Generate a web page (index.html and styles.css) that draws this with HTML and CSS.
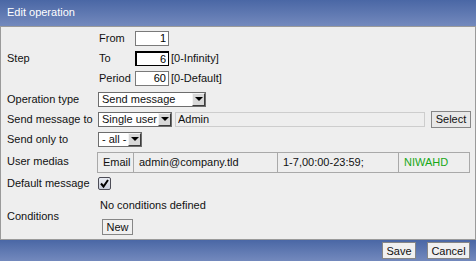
FILE: index.html
```html
<!DOCTYPE html>
<html lang="en">
<head>
  <meta charset="UTF-8" />
  <title>Edit operation</title>
  <link rel="stylesheet" href="styles.css">
</head>
<body>
  <div class="dialog">
    <div class="head">Edit operation</div>

    <div class="body">
      <!-- Step -->
      <div class="row step">
        <div class="label">Step</div>
        <div class="ctl">
          <div class="sub"><span class="sublabel">From</span><input class="num" type="text" value="1"></div>
          <div class="sub"><span class="sublabel">To</span><input class="num focus" type="text" value="6"><span class="hint">[0-Infinity]</span></div>
          <div class="sub"><span class="sublabel">Period</span><input class="num" type="text" value="60"><span class="hint">[0-Default]</span></div>
        </div>
      </div>

      <div class="row">
        <div class="label">Operation type</div>
        <div class="ctl">
          <span class="select w-op">Send message<span class="arrow"></span></span>
        </div>
      </div>

      <div class="row">
        <div class="label">Send message to</div>
        <div class="ctl">
          <span class="select w-user">Single user<span class="arrow"></span></span>
          <input class="text-off" type="text" value="Admin" readonly>
          <button class="btn btn-select">Select</button>
        </div>
      </div>

      <div class="row">
        <div class="label">Send only to</div>
        <div class="ctl">
          <span class="select w-all">- all -<span class="arrow"></span></span>
        </div>
      </div>

      <div class="row medias">
        <div class="label">User medias</div>
        <div class="ctl">
          <table class="media-table">
            <tr>
              <td class="c-type">Email</td>
              <td class="c-to">admin@company.tld</td>
              <td class="c-when">1-7,00:00-23:59;</td>
              <td class="c-sev">NIWAHD</td>
            </tr>
          </table>
        </div>
      </div>

      <div class="row">
        <div class="label">Default message</div>
        <div class="ctl">
          <span class="check">
            <svg width="11" height="11" viewBox="0 0 11 11"><path d="M2 5.5 L4.5 8.5 L9 2" fill="none" stroke="#000" stroke-width="2"/></svg>
          </span>
        </div>
      </div>

      <div class="row conditions">
        <div class="label">Conditions</div>
        <div class="ctl cond">
          <div class="none">No conditions defined</div>
          <button class="btn btn-new">New</button>
        </div>
      </div>
    </div>

    <div class="foot">
      <button class="btn btn-save">Save</button>
      <button class="btn btn-cancel">Cancel</button>
    </div>
  </div>
</body>
</html>
```

FILE: styles.css
```css
body {
  margin: 0;
  font-family: 'Liberation Sans', Arial, sans-serif;
  font-size: 11px;
  color: #111;
  background: #fff;
}

.dialog {
  width: 476px;
  height: 261px;
}

.head {
  height: 26px;
  line-height: 24px;
  padding-left: 7px;
  color: #fff;
  font-size: 11px;
  background: linear-gradient(#4a67a5, #7389bd);
  border-bottom: 1px solid #9a9a9a;
  box-sizing: content-box;
}

.body {
  height: 211px;
  padding-top: 1px;
  background: #eeeeee;
  border-left: 1px solid #9a9a9a;
  border-right: 1px solid #9a9a9a;
  border-bottom: 1px solid #9a9a9a;
}

.row {
  display: flex;
  align-items: center;
  min-height: 20px;
}

.label {
  width: 90px;
  padding-left: 6px;
  flex-shrink: 0;
}

.ctl {
  display: flex;
  align-items: center;
}

/* Step block */
.step {
  padding-bottom: 1px;
}

.step .ctl {
  flex-direction: column;
  align-items: flex-start;
}

.sub {
  display: flex;
  align-items: center;
  height: 20px;
}

.sublabel {
  width: 36px;
  padding-left: 2px;
}

.num {
  width: 34px;
  height: 15px;
  box-sizing: border-box;
  border: 1px solid #7a7a7a;
  background: #fff;
  font: inherit;
  text-align: right;
  padding: 0 2px;
  margin: 0;
}

.num.focus {
  border: 2px solid #000;
  border-right-width: 1px;
  border-bottom-width: 1px;
}

.hint {
  margin-left: 2px;
}

/* fake selects */
.select {
  display: inline-flex;
  align-items: center;
  justify-content: space-between;
  height: 15px;
  box-sizing: border-box;
  border: 1px solid #6d6d6d;
  background: #fff;
  padding-left: 3px;
  margin-left: 1px;
}

.w-op { width: 108px; }
.w-user { width: 74px; }
.w-all { width: 44px; }

.arrow {
  width: 13px;
  height: 13px;
  box-sizing: border-box;
  border: 1px solid;
  border-color: #f4f4f4 #3c3c3c #3c3c3c #f4f4f4;
  background: #d8d8d8;
  display: flex;
  align-items: center;
  justify-content: center;
}

.arrow::after {
  content: "";
  border-left: 4px solid transparent;
  border-right: 4px solid transparent;
  border-top: 4px solid #000;
}

.text-off {
  width: 250px;
  height: 15px;
  box-sizing: border-box;
  margin: 0 0 0 3px;
  padding: 0 2px;
  border: 1px solid #cdcdcd;
  background: #eeeeee;
  font: inherit;
  color: #111;
}

.btn {
  font: inherit;
  color: #111;
  height: 17px;
  box-sizing: border-box;
  padding: 0;
  margin: 0;
  border: 1px solid #868686;
  background: #f0f0f0;
}

.btn-select {
  width: 40px;
  margin-left: 6px;
  background: #e8e8e8;
}

/* media table */
.medias {
  height: 24px;
}

.media-table {
  border-collapse: collapse;
  margin-top: 2px;
}

.media-table td {
  height: 20px;
  border: 1px solid #a9a9a9;
  padding: 0 0 0 5px;
  box-sizing: border-box;
}

.c-type { width: 36px; }
.c-to { width: 144px; }
.c-when { width: 121px; }
.c-sev { width: 71px; color: #17a817; }

.check {
  width: 13px;
  height: 13px;
  box-sizing: border-box;
  margin-left: 1px;
  border: 1px solid #4d4d57;
  border-radius: 2px;
  background: linear-gradient(#e9ecf3, #c9cedb);
  display: flex;
  align-items: center;
  justify-content: center;
}

/* conditions */
.conditions {
  height: 45px;
}

.cond {
  flex-direction: column;
  align-items: flex-start;
  align-self: flex-start;
  padding-top: 5px;
}

.none {
  line-height: 14px;
  padding-left: 3px;
}

.btn-new {
  width: 31px;
  height: 16px;
  margin: 7px 0 0 5px;
}

.foot {
  height: 21px;
  display: flex;
  justify-content: flex-end;
  align-items: flex-start;
  gap: 11px;
  padding: 2px 6px 0 0;
  box-sizing: border-box;
  background: linear-gradient(#4a67a5, #7389bd);
}

.btn-save { width: 34px; }
.btn-cancel { width: 43px; }
```
